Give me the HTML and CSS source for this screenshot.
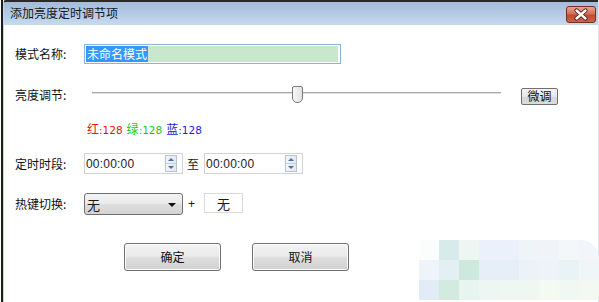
FILE: index.html
```html
<!DOCTYPE html>
<html lang="zh">
<head>
<meta charset="utf-8">
<link rel="stylesheet" href="styles.css">
</head>
<body>
<div class="window">
  <div class="titlebar">
    <span class="title">添加亮度定时调节项</span>
    <span class="close">
      <svg width="30" height="17" viewBox="0 0 30 17">
        <path d="M10.5 4.5 L19.5 12.5 M19.5 4.5 L10.5 12.5" stroke="#4a1a12" stroke-width="4.2" stroke-linecap="round"/>
        <path d="M10.5 4.5 L19.5 12.5 M19.5 4.5 L10.5 12.5" stroke="#ffffff" stroke-width="2.4" stroke-linecap="round"/>
      </svg>
    </span>
  </div>
  <div class="content">
    <div class="row row-name">
      <span class="label">模式名称:</span>
      <div class="textbox"><span class="sel">未命名模式</span><span class="rest"></span></div>
    </div>
    <div class="row row-bright">
      <span class="label">亮度调节:</span>
      <div class="slider">
        <div class="track"></div>
        <div class="thumb"></div>
      </div>
      <span class="btn-small">微调</span>
    </div>
    <div class="row row-rgb">
      <span class="c-r">红<span class="num">:128</span></span>
      <span class="c-g">绿<span class="num">:128</span></span>
      <span class="c-b">蓝<span class="num">:128</span></span>
    </div>
    <div class="row row-time">
      <span class="label">定时时段:</span>
      <div class="spin">
        <span class="spin-text">00:00:00</span>
        <span class="spin-btns"><span class="up"></span><span class="down"></span></span>
      </div>
      <span class="to">至</span>
      <div class="spin">
        <span class="spin-text">00:00:00</span>
        <span class="spin-btns"><span class="up"></span><span class="down"></span></span>
      </div>
    </div>
    <div class="row row-hotkey">
      <span class="label">热键切换:</span>
      <div class="combo"><span class="combo-text">无</span><span class="arrow"></span></div>
      <span class="plus">+</span>
      <div class="keybox">无</div>
    </div>
    <div class="row row-buttons">
      <span class="btn">确定</span>
      <span class="btn">取消</span>
    </div>
  </div>
  <div class="watermark">
    <i style="background:#fbfdfd"></i><i style="background:#d7ebeb"></i><i style="background:#eef6f4"></i><i style="background:#eaf1fa"></i><i style="background:#eaf1fa"></i><i style="background:#eff4f9"></i><i style="background:#f0f4f9"></i><i style="background:#f4f7fa"></i><i style="background:#f2f6fa"></i>
    <i style="background:#eef4fa"></i><i style="background:#e2eff3"></i><i style="background:#cde8dd"></i><i style="background:#e6eef8"></i><i style="background:#e6eef8"></i><i style="background:#ebf3f8"></i><i style="background:#edf3f8"></i><i style="background:#e9f3f6"></i><i style="background:#f0f5f8"></i>
    <i style="background:#e2ecf7"></i><i style="background:#d3eae1"></i><i style="background:#e8f4ef"></i><i style="background:#eef6f3"></i><i style="background:#eef7f2"></i><i style="background:#eef7f2"></i><i style="background:#f4f9f2"></i><i style="background:#f1f7f3"></i><i style="background:#f3f8f2"></i>
  </div>
</div>
</body>
</html>
```

FILE: styles.css
```css
* { box-sizing: border-box; }
html, body {
  margin: 0;
  padding: 0;
  background: #ffffff;
}
body {
  width: 599px;
  height: 302px;
  overflow: hidden;
  font-family: "Noto Sans CJK SC", "Liberation Sans", sans-serif;
  font-size: 12px;
  color: #1a1a1a;
}
.window {
  position: relative;
  width: 598px;
  height: 302px;
  margin-left: 1px;
  border-left: 2px solid #1c1c1c;
  border-right: 1px solid #e4e8ec;
  background: #ffffff;
}
.titlebar {
  height: 25px;
  display: flex;
  align-items: center;
  justify-content: space-between;
  padding: 0 2px 0 6px;
  border-top: 2px solid #2a2a2a;
  border-left: 1px solid #c4d6ea;
  border-top-left-radius: 3px;
  background: linear-gradient(#a3bcda, #b7cce6 60%, #c8daee);
}
.title {
  font-size: 12px;
  color: #101820;
  line-height: 1;
  margin-top: -1px;
}
.close {
  display: block;
  width: 30px;
  height: 17px;
  margin-top: 1px;
  border: 1px solid #7a2e22;
  border-radius: 3px;
  background: linear-gradient(#e7a393, #d66f58 45%, #c04a32 55%, #c9654b);
  overflow: hidden;
}
.close svg { display: block; margin: -1px 0 0 -1px; }
.content {
  display: flex;
  flex-direction: column;
  padding-left: 11px;
  border-left: 1px solid #c4d6ea;
  height: 277px;
}
.row {
  display: flex;
  align-items: center;
}
.label {
  width: 69px;
  flex: none;
  line-height: 1;
  color: #111;
}
.row-name { margin-top: 19px; height: 20px; }
.textbox {
  width: 257px;
  height: 20px;
  border: 1px solid #8fb2d6;
  padding: 1px 2px 1px 1px;
  display: flex;
  align-items: stretch;
  background: #fff;
}
.sel {
  background: #3399ff;
  color: #ffffff;
  line-height: 16px;
  padding: 0 1px;
}
.rest {
  flex: 1;
  background: #c9e7cd;
}
.row-bright { margin-top: 22px; height: 18px; }
.slider {
  position: relative;
  width: 409px;
  height: 18px;
  margin-left: 8px;
}
.track {
  position: absolute;
  left: 0;
  right: 0;
  top: 6px;
  height: 2px;
  border-top: 1px solid #a8a8a8;
  border-bottom: 1px solid #e0e0e0;
}
.thumb {
  position: absolute;
  left: 200px;
  top: 0;
  width: 11px;
  height: 17px;
  border: 1px solid #7a7a7a;
  border-radius: 2px 2px 5px 5px;
  background: linear-gradient(90deg, #f6f6f6, #e2e2e2);
}
.btn-small {
  margin-left: 20px;
  width: 37px;
  height: 17px;
  border: 1px solid #6f6f6f;
  border-radius: 2px;
  background: linear-gradient(#f4f4f4, #e6e6e6 50%, #d6d6d6 55%, #dcdcdc);
  display: flex;
  align-items: center;
  justify-content: center;
  line-height: 1;
  color: #111;
  margin-top: 2px;
}
.row-rgb {
  margin-top: 18px;
  height: 14px;
  padding-left: 72px;
  gap: 4px;
  line-height: 1;
}
.num {
  font-family: "DejaVu Sans", sans-serif;
  font-size: 10.5px;
}
.c-r { color: #ee1111; }
.c-g { color: #11cc22; }
.c-b { color: #1a22dd; }
.row-time { margin-top: 17px; height: 21px; }
.spin {
  width: 99px;
  height: 21px;
  border: 1px solid #d0d3d8;
  display: flex;
  align-items: center;
  justify-content: space-between;
  padding: 0 5px 0 1px;
  background: #fff;
}
.spin-text {
  font-family: "Liberation Sans", sans-serif;
  font-size: 12px;
  letter-spacing: 0.2px;
  color: #222;
}
.spin-btns {
  width: 12px;
  height: 17px;
  display: flex;
  flex-direction: column;
  border: 1px solid #b9c4d2;
  background: linear-gradient(90deg, #f3f5f8, #e3e8ee);
}
.spin-btns .up, .spin-btns .down {
  flex: 1;
  display: flex;
  align-items: center;
  justify-content: center;
}
.spin-btns .up { border-bottom: 1px solid #c7d0dc; }
.spin-btns .up::before {
  content: "";
  border-left: 3px solid transparent;
  border-right: 3px solid transparent;
  border-bottom: 3px solid #4d6fa8;
}
.spin-btns .down::before {
  content: "";
  border-left: 3px solid transparent;
  border-right: 3px solid transparent;
  border-top: 3px solid #4d6fa8;
}
.to {
  margin: 0 5px 0 4px;
  line-height: 1;
}
.row-hotkey { margin-top: 19px; height: 22px; }
.combo {
  width: 99px;
  height: 22px;
  border: 1px solid #707070;
  border-radius: 3px;
  background: linear-gradient(#f3f3f3, #ebebeb 45%, #dddddd 55%, #d4d4d4);
  display: flex;
  align-items: center;
  justify-content: space-between;
  padding: 0 6px 0 2px;
}
.combo-text { line-height: 1; font-size: 13px; }
.arrow {
  border-left: 4px solid transparent;
  border-right: 4px solid transparent;
  border-top: 4px solid #111;
  margin-top: 2px;
}
.plus {
  margin: 0 9px 0 5px;
  font-family: "Liberation Sans", sans-serif;
  font-size: 12px;
}
.keybox {
  width: 39px;
  height: 20px;
  border: 1px solid #d9d9d9;
  display: flex;
  align-items: center;
  justify-content: center;
  line-height: 1;
  font-size: 13px;
  margin-top: -2px;
}
.row-buttons {
  margin-top: 28px;
  height: 28px;
  padding-left: 109px;
  gap: 31px;
}
.btn {
  width: 97px;
  height: 28px;
  border: 1px solid #707070;
  border-radius: 3px;
  background: linear-gradient(#f3f3f3, #ebebeb 45%, #dddddd 55%, #d1d1d1);
  box-shadow: inset 0 0 0 1px #fcfcfc;
  display: flex;
  align-items: center;
  justify-content: center;
  line-height: 1;
  font-size: 12px;
  color: #111;
}
.watermark {
  position: absolute;
  right: -1px;
  bottom: 2px;
  width: 180px;
  height: 60px;
  display: grid;
  grid-template-columns: repeat(9, 20px);
  grid-auto-rows: 20px;
  border-top-right-radius: 18px;
  overflow: hidden;
}
.watermark i { display: block; }
```
